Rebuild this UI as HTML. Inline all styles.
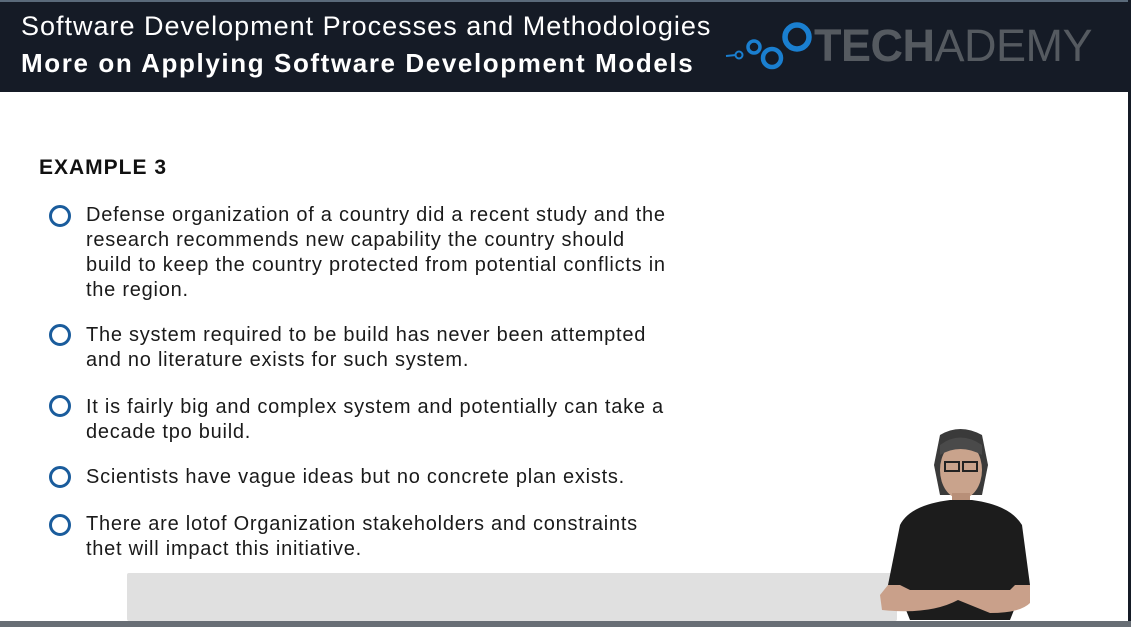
<!DOCTYPE html>
<html><head><meta charset="utf-8"><style>
*{margin:0;padding:0;box-sizing:border-box}
body{width:1131px;height:627px;overflow:hidden;background:#fff;position:relative;font-family:"Liberation Sans",sans-serif}
.hdr{position:absolute;left:0;top:0;width:1131px;height:92px;background:#151b26;border-top:2px solid #5a6a7a}
.t1{position:absolute;left:21px;top:9px;font-size:27px;color:#fff;white-space:nowrap;letter-spacing:1px}
.t2{position:absolute;left:21px;top:46px;font-size:26px;font-weight:bold;color:#fff;white-space:nowrap;letter-spacing:1.6px}
.logo{position:absolute;left:814px;top:18px;font-size:45px;color:#555a60;white-space:nowrap;letter-spacing:-0.5px}
.logo b{font-weight:bold}
.rb{position:absolute;right:0;top:0;width:3px;height:627px;background:#151b26}
h2{position:absolute;left:39px;top:156px;font-size:21px;font-weight:bold;color:#111;letter-spacing:1px}
.b{position:absolute;left:86px;font-size:20px;line-height:25px;color:#1a1a1a;white-space:nowrap;letter-spacing:0.75px}
.c{position:absolute;left:49px;width:22px;height:22px;border:3.5px solid #1a5c9c;border-radius:50%}
.gray{position:absolute;left:127px;top:573px;width:770px;height:48px;background:#e0e0e0;border-radius:2px}
.foot{position:absolute;left:0;top:621px;width:1131px;height:6px;background:#686e75}
</style></head><body>
<div class="hdr">
<div class="t1">Software Development Processes and Methodologies</div>
<div class="t2">More on Applying Software Development Models</div>
<svg style="position:absolute;left:724px;top:18px" width="92" height="52">
<line x1="2" y1="36" x2="12" y2="35" stroke="#1a7fd0" stroke-width="2"/>
<circle cx="15" cy="35" r="3.5" fill="none" stroke="#1a7fd0" stroke-width="2"/>
<circle cx="30" cy="27" r="6" fill="none" stroke="#1a7fd0" stroke-width="3.5"/>
<circle cx="48" cy="38" r="9" fill="none" stroke="#1a7fd0" stroke-width="4.5"/>
<circle cx="73" cy="17" r="12" fill="none" stroke="#1a7fd0" stroke-width="5.5"/>
</svg>
<div class="logo"><b>TECH</b>ADEMY</div>
</div>
<div class="rb"></div>
<h2>EXAMPLE 3</h2>
<div class="c" style="top:205px"></div>
<div class="b" style="top:203px">Defense organization of a country did a recent study and the<br>research recommends new capability the country should<br>build to keep the country protected from potential conflicts in<br>the region.</div>
<div class="c" style="top:324px"></div>
<div class="b" style="top:323px">The system required to be build has never been attempted<br>and no literature exists for such system.</div>
<div class="c" style="top:395px"></div>
<div class="b" style="top:395px">It is fairly big and complex system and potentially can take a<br>decade tpo build.</div>
<div class="c" style="top:466px"></div>
<div class="b" style="top:465px">Scientists have vague ideas but no concrete plan exists.</div>
<div class="c" style="top:514px"></div>
<div class="b" style="top:512px">There are lotof Organization stakeholders and constraints<br>thet will impact this initiative.</div>
<div class="gray"></div>
<div class="foot"></div>
<svg style="position:absolute;left:870px;top:425px" width="170" height="202">
<path d="M70 10 Q90 -2 112 10 L118 40 L112 70 L70 70 L64 40 Z" fill="#3a3a3a"/>
<ellipse cx="91" cy="45" rx="21" ry="29" fill="#c9a38c"/>
<path d="M70 20 Q90 5 112 20 L112 30 Q90 18 70 30Z" fill="#4a4a4a"/>
<rect x="75" y="37" width="14" height="9" fill="none" stroke="#222" stroke-width="2"/>
<rect x="93" y="37" width="14" height="9" fill="none" stroke="#222" stroke-width="2"/>
<rect x="82" y="68" width="18" height="12" fill="#b88f78"/>
<path d="M30 100 Q40 80 80 75 L102 75 Q140 80 152 100 L160 160 L150 170 L140 195 L40 195 L30 170 L18 160 Z" fill="#1c1c1c"/>
<path d="M18 160 L10 170 L12 185 Q60 190 88 175 L120 188 Q150 188 160 178 L160 160 L145 160 L140 165 L40 165 L30 160Z" fill="#c9a08a"/>
</svg>
</body></html>
